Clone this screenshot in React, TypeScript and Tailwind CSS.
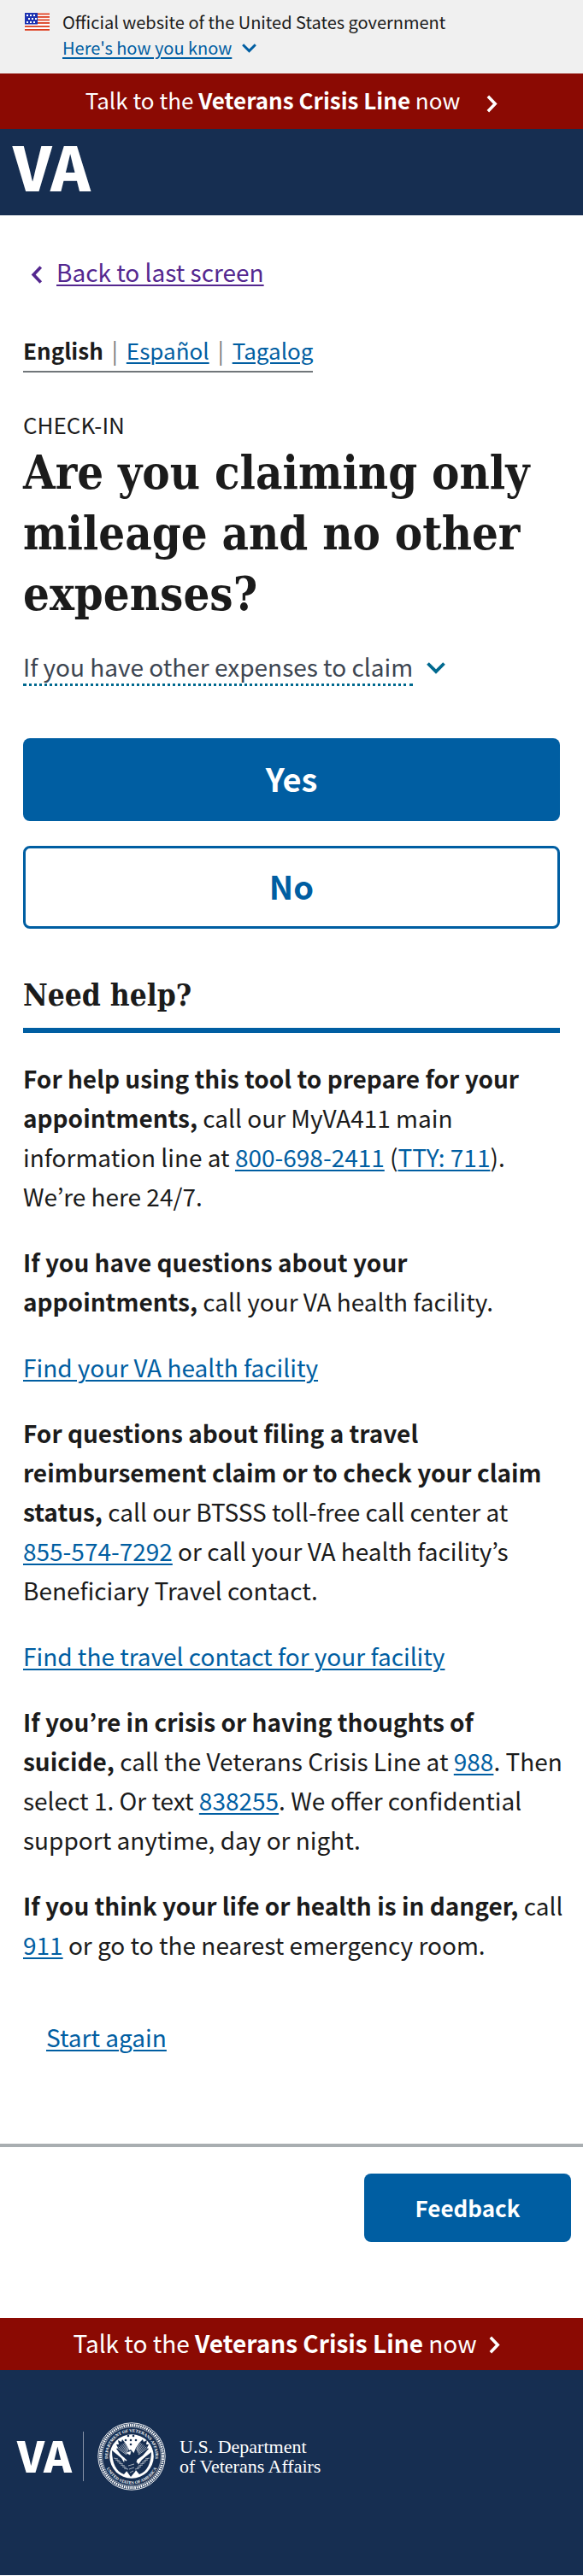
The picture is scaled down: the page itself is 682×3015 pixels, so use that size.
import React from "react";

const sans = "font-['Noto_Sans_CJK_KR','Noto_Sans',sans-serif]";
const slab = "font-['DejaVu_Serif_Condensed','DejaVu_Serif',serif]";
const underline = "underline decoration-2 underline-offset-3";
const link = "text-[#005ea2] underline decoration-2 underline-offset-3 whitespace-nowrap";

type ChevronProps = { dir: "down" | "left" | "right"; className: string };

function Chevron({ dir, className }: ChevronProps) {
  const horizontal = dir !== "down";
  const points = { down: "1.5,1.5 11,11 20.5,1.5", left: "12,1.5 3,11 12,20.5", right: "2,1.5 11,11 2,20.5" }[dir];
  return (
    <svg viewBox={horizontal ? "0 0 14 22" : "0 0 22 14"} className={className} fill="none" stroke="currentColor" strokeWidth="3.8" aria-hidden="true">
      <polyline points={points} />
    </svg>
  );
}

function Flag() {
  return (
    <svg viewBox="0 0 29 21" className="mt-[15px] h-[21px] w-[29px] shrink-0" aria-hidden="true">
      <rect width="29" height="21" fill="#fff" />
      {[0.5, 4, 7.5, 11, 15, 19].map((y) => (
        <rect key={y} y={y} width="29" height="1.8" fill="#db3e1f" />
      ))}
      <rect width="15" height="13.5" fill="#1e33b1" />
      {[2, 6, 10].map((y, row) =>
        [2, 6, 10].map((x) => <rect key={`${x}-${y}`} x={x + (row === 1 ? 2 : 0)} y={y} width="2" height="2" fill="#fff" />)
      )}
    </svg>
  );
}

function Seal() {
  const feathers = [0, 1, 2, 3, 4, 5, 6];
  return (
    <svg viewBox="0 0 80 80" className="h-20 w-20 shrink-0" role="img" aria-label="Department of Veterans Affairs seal">
      <defs>
        <path id="sealTop" d="M 12.6 44 A 27.8 27.8 0 1 1 67.4 44" />
        <path id="sealBottom" d="M 8.8 49 A 32.5 32.5 0 0 0 71.2 49" />
      </defs>
      <circle cx="40" cy="40" r="39.2" fill="none" stroke="#fff" strokeWidth="0.9" />
      <circle cx="40" cy="40" r="36.6" fill="none" stroke="#fff" strokeWidth="3" strokeDasharray="1.6 0.9" />
      <circle cx="40" cy="40" r="34.4" fill="none" stroke="#fff" strokeWidth="0.5" />
      <g fill="#fff" className="font-['Liberation_Serif',serif] text-[5px] font-bold">
        <text textAnchor="middle"><textPath href="#sealTop" startOffset="50%">DEPARTMENT OF VETERANS AFFAIRS</textPath></text>
        <text textAnchor="middle"><textPath href="#sealBottom" startOffset="50%">UNITED STATES OF AMERICA</textPath></text>
      </g>
      <circle cx="40" cy="40" r="25.8" fill="#fff" />
      <g fill="#162e51">
        {[[36, 16], [42, 16], [33, 21], [45, 21], [39, 21], [39, 26]].map(([x, y]) => (
          <circle key={`${x}-${y}`} cx={x} cy={y} r="1.3" />
        ))}
        <path d="M38 47 L28 39 L22 31 L24 30 L22 26 L25 26 L24 21 L28 23 L29 20 L33 25 L36 30 L39 37 Z" />
        <path d="M42 47 L53 39 L60 31 L58 30 L60 26 L57 26 L58 21 L54 23 L53 20 L48 25 L45 30 L42 37 Z" />
        <path d="M33 35 L39 32 L44 38 L48 50 L44 58 L39 64 L34 57 L31 48 Z" />
        <path d="M17 33 L28 42 L36 55 L31 61 C22 58 17 48 17 33 Z" />
        <path d="M63 33 L52 44 L44 55 L49 61 C58 58 63 48 63 33 Z" />
      </g>
      <g stroke="#fff" strokeWidth="0.6">
        {feathers.map((i) => (
          <g key={i}>
            <line x1={23 + i * 1.7} y1={30 - i * 1.2} x2={34 + i * 0.4} y2={38 - i} />
            <line x1={59 - i * 1.7} y1={30 - i * 1.2} x2={48 - i * 0.4} y2={38 - i} />
            <line x1={19 + i * 2} y1={42 + i * 2} x2={24 + i * 2} y2={43 + i * 2} />
            <line x1={61 - i * 2} y1={42 + i * 2} x2={56 - i * 2} y2={43 + i * 2} />
          </g>
        ))}
        <line x1="18" y1="31" x2="34" y2="45" strokeWidth="1.6" />
        <line x1="64" y1="33" x2="46" y2="47" strokeWidth="2.2" />
        <path d="M34 36 L39 34 L38 38 Z" fill="#fff" />
        <path d="M36 51 L43 49 M37 55 L43 53 M38 59 L42 57" />
      </g>
    </svg>
  );
}

export default function App() {
  return (
    <div className={`${sans} bg-white text-[28px] leading-[46px] text-[#1b1b1b]`}>
      <section className="flex h-[86px] gap-[15px] bg-[#f0f0f0] pl-[29px]" aria-label="Official government website">
        <Flag />
        <div className="flex flex-col items-start pt-[11px] text-[20px] leading-[30px]">
          <span>Official website of the United States government</span>
          <button type="button" className="flex items-center gap-3 text-[#005ea2]">
            <span className={underline}>Here's how you know</span>
            <Chevron dir="down" className="h-[11px] w-[17px]" />
          </button>
        </div>
      </section>

      <a href="#crisis" className="flex h-[65px] items-center justify-center gap-[31px] bg-[#8b0a03] pb-1 text-[26px] text-white">
        <span>Talk to the <b>Veterans Crisis Line</b> now</span>
        <Chevron dir="right" className="mt-[10px] h-[21px] w-[13px]" />
      </a>

      <header className="h-[101px] bg-[#162e51] px-[15px]">
        <a href="#home" className="block w-fit text-[71px] leading-[84px] font-black text-white">VA</a>
      </header>

      <main className="px-[27px] pt-[43px]">
        <a href="#back" className="flex w-fit items-center gap-4 pl-[9px] text-[#54278f]">
          <Chevron dir="left" className="mt-[6px] h-[21px] w-[14px]" />
          <span className={underline}>Back to last screen</span>
        </a>

        <nav className="mt-[46px] flex w-fit gap-[10px] border-b-2 border-[#71767a] pb-px text-[26px]" aria-label="Language">
          <b>English</b>
          <span className="text-[#71767a]">|</span>
          <a href="#es" className={link}>Español</a>
          <span className="text-[#71767a]">|</span>
          <a href="#tl" className={link}>Tagalog</a>
        </nav>

        <p className="mt-10 text-[26px] leading-[42px]">CHECK-IN</p>
        <h1 className={`${slab} text-[54px] leading-[71px] font-bold`}>
          Are you claiming only mileage and no other expenses?
        </h1>

        <button type="button" className="mt-[29px] flex items-center gap-4 leading-10 text-[#3d4551]">
          <span className="border-b-3 border-dotted border-[#00698f]">If you have other expenses to claim</span>
          <Chevron dir="down" className="h-[14px] w-[22px] text-[#00698f]" />
        </button>

        <div className="mt-[61px] flex flex-col gap-[29px] text-[38px] font-bold">
          <button type="button" className="h-[97px] rounded-lg bg-[#005ea2] pb-1 text-white">Yes</button>
          <button type="button" className="h-[97px] rounded-lg border-3 border-[#005ea2] pb-1 text-[#005ea2]">No</button>
        </div>

        <h2 className={`${slab} mt-12 border-b-6 border-[#005ea2] pb-2 text-[35px] leading-[60px] font-bold`}>Need help?</h2>

        <div className="-mr-2 mt-[30px] flex flex-col gap-[31px]">
          <p>
            <b>For help using this tool to prepare for your appointments,</b> call our MyVA411 main information line at{" "}
            <a href="tel:8006982411" className={link}>800-698-2411</a> (<a href="tel:711" className={link}>TTY: 711</a>). We’re here 24/7.
          </p>
          <p><b>If you have questions about your appointments,</b> call your VA health facility.</p>
          <p><a href="#facility" className={link}>Find your VA health facility</a></p>
          <p>
            <b>For questions about filing a travel reimbursement claim or to check your claim status,</b> call our BTSSS toll-free call center at{" "}
            <a href="tel:8555747292" className={link}>855-574-7292</a> or call your VA health facility’s Beneficiary Travel contact.
          </p>
          <p><a href="#travel" className={link}>Find the travel contact for your facility</a></p>
          <p>
            <b>If you’re in crisis or having thoughts of suicide,</b> call the Veterans Crisis Line at{" "}
            <a href="tel:988" className={link}>988</a>. Then select 1. Or text <a href="sms:838255" className={link}>838255</a>. We offer confidential support anytime, day or night.
          </p>
          <p>
            <b>If you think your life or health is in danger,</b> call <a href="tel:911" className={link}>911</a> or go to the nearest emergency room.
          </p>
        </div>

        <a href="#start" className={`ml-[27px] mt-[62px] block w-fit ${link}`}>Start again</a>
      </main>

      <div className="mt-[102px] flex h-[204px] items-start justify-end border-t-4 border-[#a9aeb1] px-[14px] pt-[31px]">
        <button type="button" className="h-20 w-[242px] rounded-lg bg-[#005ea2] text-[26px] font-bold text-white">Feedback</button>
      </div>

      <footer className="bg-[#162e51] text-white">
        <a href="#crisis-footer" className="flex h-[61px] items-center justify-center gap-[14px] bg-[#8b0a03] pr-3 pb-[3px]">
          <span>Talk to the <b>Veterans Crisis Line</b> now</span>
          <Chevron dir="right" className="mt-1 h-[21px] w-[13px]" />
        </a>
        <div className="flex h-[240px] items-start px-5 pt-[61px]">
          <div className="flex h-20 items-center">
            <span className="pb-[6px] text-[50px] font-black">VA</span>
            <span className="ml-[13px] h-[58px] w-px bg-[#8793a8]" />
            <span className="ml-4"><Seal /></span>
            <span className="ml-4 font-['Liberation_Serif',serif] text-[22px] leading-[23px]">U.S. Department<br />of Veterans Affairs</span>
          </div>
        </div>
      </footer>
    </div>
  );
}
